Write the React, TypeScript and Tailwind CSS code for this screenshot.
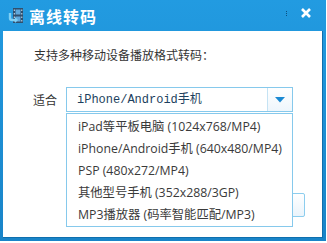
import React from "react";

const options = [
  "iPad等平板电脑 (1024x768/MP4)",
  "iPhone/Android手机 (640x480/MP4)",
  "PSP (480x272/MP4)",
  "其他型号手机 (352x288/3GP)",
  "MP3播放器 (码率智能匹配/MP3)",
];

function TitleIcon() {
  return (
    <svg width="17" height="17" viewBox="0 0 17 17">
      <rect x="6" y="1" width="10" height="15" fill="#2f4f6e" />
      <rect x="8.5" y="2.5" width="5" height="5" fill="#5fa8dc" />
      <rect x="8.5" y="9.5" width="5" height="5" fill="#5fa8dc" />
      <rect x="6.8" y="2.5" width="1" height="1.5" fill="#cfe3f2" />
      <rect x="6.8" y="6" width="1" height="1.5" fill="#cfe3f2" />
      <rect x="6.8" y="9.5" width="1" height="1.5" fill="#cfe3f2" />
      <rect x="6.8" y="13" width="1" height="1.5" fill="#cfe3f2" />
      <rect x="14.3" y="2.5" width="1" height="1.5" fill="#cfe3f2" />
      <rect x="14.3" y="6" width="1" height="1.5" fill="#cfe3f2" />
      <rect x="14.3" y="9.5" width="1" height="1.5" fill="#cfe3f2" />
      <rect x="14.3" y="13" width="1" height="1.5" fill="#cfe3f2" />
      <path d="M3 6 L3 11 Q3 13 5 13 L9 13" stroke="#7fd0f5" strokeWidth="2.4" fill="none" />
      <path d="M8 10 L11 13 L8 16 Z" fill="#7fd0f5" />
    </svg>
  );
}

export default function App() {
  return (
    <div className="w-[327px] h-[243px] bg-white relative overflow-hidden" style={{ fontFamily: '"Noto Sans CJK SC", sans-serif' }}>
      <div className="w-[326px] h-[241px] flex flex-col bg-gradient-to-b from-[#229be1] to-[#1984c8] px-[3px] pb-[3px]">
        {/* title bar */}
        <div className="h-[31px] flex items-center -mx-[3px] pl-[7px] pr-[15px]">
          <TitleIcon />
          <span className="ml-[5px] text-white font-bold text-[16px] tracking-[1px] leading-none">离线转码</span>
          <div className="ml-auto flex flex-col gap-[1px] mr-[14px] mt-[-4px]">
            <span className="w-[1px] h-[1px] bg-[#0b4f80]" />
            <span className="w-[1px] h-[1px] bg-[#0b4f80]" />
            <span className="w-[1px] h-[1px] bg-[#0b4f80]" />
          </div>
          <svg width="10" height="10" viewBox="0 0 10 10" className="mt-[-6px]">
            <path d="M1 1 L9 9 M9 1 L1 9" stroke="white" strokeWidth="2.6" />
          </svg>
        </div>

        {/* body */}
        <div className="flex-1 bg-white border-r border-b border-[#0f6fae] flex flex-col pl-[28px] pr-[17px] pt-[16px] relative">
          <p className="text-[12px] leading-[16px] text-[#333] pl-[3px]">支持多种移动设备播放格式转码：</p>

          <div className="flex items-center mt-[24px]">
            <span className="w-[35px] text-[12px] text-[#333] pl-[2px]">适合</span>
            <div className="w-[227px] h-[25px] border border-[#86c9ec] flex bg-white">
              <div className="flex-1 flex items-center pl-[10px] text-[12px] text-[#1d3f5e]" style={{ fontFamily: '"Liberation Mono", "Noto Sans CJK SC", monospace' }}>
                iPhone/Android手机
              </div>
              <div className="w-[25px] border-l border-[#c5e3f4] flex items-center justify-center bg-gradient-to-b from-white to-[#eef6fc]">
                <svg width="10" height="6" viewBox="0 0 10 6">
                  <path d="M0 0 L10 0 L5 5.5 Z" fill="#1b8ad3" />
                </svg>
              </div>
            </div>
          </div>

          <div className="mt-auto mb-[20px] self-end w-[70px] h-[24px] border border-[#8ccdee] rounded-[2px] bg-gradient-to-b from-white to-[#eaf4fb]" />

          {/* dropdown list */}
          <div className="absolute left-[63px] top-[82px] w-[227px] h-[114px] border border-[#86c9ec] bg-white pt-[2px]">
            {options.map((o) => (
              <div key={o} className="h-[22px] flex items-center pl-[11px] text-[12.3px] text-[#3a3a3a] whitespace-nowrap" style={{ fontFamily: '"Open Sans", "Noto Sans CJK SC", sans-serif' }}>
                {o}
              </div>
            ))}
          </div>
        </div>
      </div>
    </div>
  );
}
